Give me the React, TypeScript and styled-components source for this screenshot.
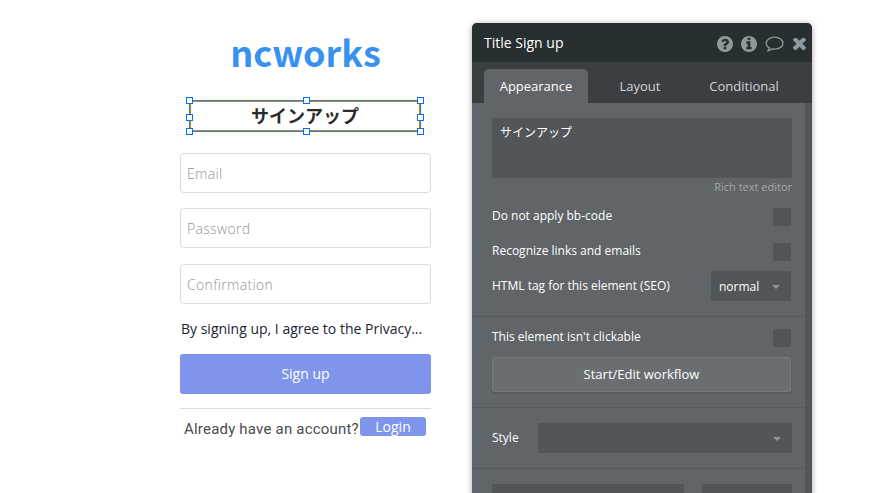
import type { ReactNode } from "react";
import styled, { createGlobalStyle } from "styled-components";

const GlobalStyle = createGlobalStyle`
  * {
    box-sizing: border-box;
  }
  body {
    margin: 0;
    background: #fff;
    font-family: "Open Sans", "Noto Sans CJK JP", sans-serif;
  }
`;

const Page = styled.div`
  height: 493px;
  overflow: hidden;
  display: flex;
  align-items: flex-start;
  gap: 41px;
  padding: 23px 0 0 180px;
`;

const Form = styled.div`
  width: 251px;
  display: flex;
  flex-direction: column;
`;

const Brand = styled.h1`
  margin: 0;
  height: 60px;
  line-height: 57px;
  font-family: "Noto Sans CJK JP", sans-serif;
  font-size: 36px;
  font-weight: 700;
  color: #3991ef;
  text-align: center;
`;

const Selection = styled.div`
  position: relative;
  width: 232px;
  height: 32px;
  margin: 17px 0 0 9px;
  border: 1px solid #1a86e8;
  outline: 1px solid #e07c00;
  outline-offset: -2px;
  line-height: 28px;
  font-family: "Noto Sans CJK JP", sans-serif;
  font-size: 18px;
  font-weight: 700;
  color: #2b2b2b;
  text-align: center;
`;

const Handle = styled.i<{ $x: number; $y: number }>`
  position: absolute;
  left: ${({ $x }) => $x}px;
  top: ${({ $y }) => $y}px;
  width: 7px;
  height: 7px;
  border: 1px solid #0b6cf5;
  background: #fff;
`;

const Input = styled.input<{ $top: number }>`
  width: 251px;
  height: 40px;
  margin-top: ${({ $top }) => $top}px;
  padding: 0 6px;
  border: 1px solid #d9d9e3;
  border-radius: 4px;
  font-family: "Open Sans", sans-serif;
  font-size: 14px;
  font-weight: 300;
  letter-spacing: 0.33px;
  &::placeholder {
    color: #8f959d;
  }
`;

const Terms = styled.div`
  height: 20px;
  margin: 15px 0 0 1px;
  line-height: 20px;
  font-size: 14px;
  color: #1c2331;
  white-space: nowrap;
`;

const SubmitButton = styled.button`
  height: 40px;
  margin-top: 15px;
  padding: 0 0 2px;
  border: 0;
  border-radius: 3px;
  background: #7f95eb;
  color: #fff;
  font-family: inherit;
  font-size: 14px;
`;

const LoginRow = styled.div`
  display: flex;
  margin-top: 14px;
  padding: 8px 0 0 4px;
  border-top: 1px solid #dcdcdf;
  span {
    width: 176px;
    line-height: 24px;
    font-family: Roboto, sans-serif;
    font-size: 15px;
    letter-spacing: 0.2px;
    color: #4b4b4b;
    white-space: nowrap;
  }
`;

const LoginButton = styled.button`
  width: 66px;
  height: 19px;
  padding: 0;
  border: 0;
  border-radius: 3px;
  background: #7f95eb;
  color: #fff;
  font-family: inherit;
  font-size: 14px;
  line-height: 19px;
`;

const PanelShadow = styled.div`
  border-radius: 5px 5px 0 0;
  box-shadow: 0 1px 6px rgba(0, 0, 0, 0.35);
`;

const Panel = styled.div`
  width: 340px;
  height: 490px;
  border-radius: 5px 5px 0 0;
  overflow: hidden;
  background: #5f6568;
  color: #fff;
  font-size: 12px;
`;

const PanelHeader = styled.div`
  display: flex;
  align-items: center;
  height: 39px;
  padding: 0 6px 0 12px;
  background: #282f31;
  font-size: 14px;
`;

const HeaderIcons = styled.div`
  display: flex;
  align-items: center;
  gap: 8px;
  margin: 3px 0 0 auto;
  color: #8e999d;
  svg {
    display: block;
    fill: currentColor;
  }
  svg:last-child {
    margin-left: 1px;
  }
`;

const Tabs = styled.div`
  display: flex;
  align-items: flex-end;
  height: 41px;
  padding-left: 12px;
  background: #3a3f41;
`;

const Tab = styled.div<{ $active?: boolean }>`
  width: 104px;
  height: 34px;
  border-radius: 5px 5px 0 0;
  background: ${({ $active }) => ($active ? "#5f6568" : "transparent")};
  color: ${({ $active }) => ($active ? "#fff" : "#d3d5d6")};
  font-size: 13px;
  line-height: 35px;
  text-align: center;
`;

const PanelBody = styled.div`
  height: 410px;
  border-right: 7px solid #515658;
`;

const Section = styled.section<{ $height: number; $top?: number }>`
  height: ${({ $height }) => $height}px;
  padding: ${({ $top = 0 }) => $top}px 13px 0 20px;
  border-bottom: 1px solid #565c5e;
`;

const TextArea = styled.div`
  height: 60px;
  padding: 5px 8px;
  background: #515658;
  font-family: "Noto Sans CJK JP", sans-serif;
  font-size: 12px;
  line-height: 18px;
`;

const RichLink = styled.div`
  height: 19px;
  font-size: 11px;
  line-height: 18px;
  color: #a4a8aa;
  text-align: right;
`;

const Row = styled.div<{ $height: number }>`
  display: flex;
  align-items: center;
  justify-content: space-between;
  height: ${({ $height }) => $height}px;
  padding-right: 1px;
`;

const Checkbox = styled.div`
  width: 18px;
  height: 18px;
  margin-top: 2px;
  border-radius: 1px;
  background: #515658;
`;

const Select = styled.div<{ $width: number }>`
  display: flex;
  align-items: center;
  justify-content: space-between;
  width: ${({ $width }) => $width}px;
  height: 30px;
  padding: 2px 11px 0 8px;
  border-radius: 1px;
  background: #515658;
  &::after {
    content: "";
    margin-left: auto;
    border: 4px solid transparent;
    border-top-color: #92989a;
    border-bottom: 0;
  }
`;

const WorkflowButton = styled.button`
  display: block;
  width: 299px;
  height: 35px;
  padding: 0 0 2px;
  border: 1px solid #757a7c;
  border-radius: 2px;
  background: #696e70;
  box-shadow: 0 1px 2px rgba(0, 0, 0, 0.15);
  color: #fff;
  font-family: inherit;
  font-size: 13px;
`;

const ClickableRow = styled(Row)`
  padding-bottom: 2px;
  ${Checkbox} {
    margin-top: 4px;
  }
`;

const StyleRow = styled.div`
  display: flex;
  justify-content: space-between;
  padding-top: 15px;
  line-height: 29px;
`;

const SizeRow = styled.div`
  display: flex;
  gap: 18px;
  padding: 15px 13px 0 20px;
`;

const SizeField = styled.div<{ $width: number }>`
  width: ${({ $width }) => $width}px;
  height: 30px;
  background: #515658;
`;

const handles = [
  [-4, -4],
  [113, -4],
  [227, -4],
  [-4, 13],
  [227, 13],
  [-4, 27],
  [113, 27],
  [227, 27],
];

function CircleIcon({ children }: { children: ReactNode }) {
  return (
    <svg width="16" height="16" viewBox="128 128 1536 1536">
      {children}
    </svg>
  );
}

const ring =
  "M1664 896q0 209-103 385.5t-279.5 279.5-385.5 103-385.5-103-279.5-279.5-103-385.5 103-385.5 279.5-279.5 385.5-103 385.5 103 279.5 279.5 103 385.5z";

function HelpIcon() {
  return (
    <CircleIcon>
      <path
        fillRule="evenodd"
        d={
          "M1024 1376v-192q0-14-9-23t-23-9h-192q-14 0-23 9t-9 23v192q0 14 9 23t23 9h192q14 0 23-9t9-23zm256-672q0-88-55.5-163t-138.5-116-170-41q-243 0-371 213-15 24 8 42l132 100q7 6 19 6 16 0 25-12 53-68 86-92 34-24 86-24 48 0 85.5 26t37.5 59q0 38-20 61t-68 45q-63 28-115.5 86.5t-52.5 125.5v36q0 14 9 23t23 9h192q14 0 23-9t9-23q0-19 21.5-49.5t54.5-49.5q32-18 49-28.5t46-35 44.5-48 28-60.5 12.5-81z" +
          ring
        }
      />
    </CircleIcon>
  );
}

function InfoIcon() {
  return (
    <CircleIcon>
      <path
        fillRule="evenodd"
        d={
          "M1152 1376v-160q0-14-9-23t-23-9h-96v-512q0-14-9-23t-23-9h-320q-14 0-23 9t-9 23v160q0 14 9 23t23 9h96v320h-96q-14 0-23 9t-9 23v160q0 14 9 23t23 9h448q14 0 23-9t9-23zm-128-896v-160q0-14-9-23t-23-9h-192q-14 0-23 9t-9 23v160q0 14 9 23t23 9h192q14 0 23-9t9-23z" +
          ring
        }
      />
    </CircleIcon>
  );
}

function CommentIcon() {
  return (
    <svg width="19" height="16" viewBox="0 0 19 16">
      <path
        d="M9.6 1.2C5 1.2 1.2 3.8 1.2 7.2c0 2 1.2 3.6 3.1 4.7-.2 1.3-.8 2.2-1.8 3 1.800-.2 3.400-1 4.600-2.100.8.2 1.600.3 2.500.3 4.600 0 8.400-2.600 8.400-5.900S14.200 1.200 9.600 1.200z"
        fill="none"
        stroke="currentColor"
        strokeWidth="1.3"
        strokeLinejoin="round"
      />
    </svg>
  );
}

function CloseIcon() {
  return (
    <svg width="13" height="13" viewBox="110 434 1188 1188">
      <path d="M1298 1322q0 40-28 68l-136 136q-28 28-68 28t-68-28l-294-294-294 294q-28 28-68 28t-68-28l-136-136q-28-28-28-68t28-68l294-294-294-294q-28-28-28-68t28-68l136-136q28-28 68-28t68 28l294 294 294-294q28-28 68-28t68 28l136 136q28 28 28 68t-28 68l-294 294 294 294q28 28 28 68z" />
    </svg>
  );
}

function SignUpForm() {
  return (
    <Form>
      <Brand>ncworks</Brand>
      <Selection>
        サインアップ
        {handles.map(([x, y]) => (
          <Handle key={`${x}:${y}`} $x={x} $y={y} />
        ))}
      </Selection>
      <Input placeholder="Email" $top={21} />
      <Input placeholder="Password" $top={15} />
      <Input placeholder="Confirmation" $top={16} />
      <Terms>By signing up, I agree to the Privacy...</Terms>
      <SubmitButton>Sign up</SubmitButton>
      <LoginRow>
        <span>Already have an account?</span>
        <LoginButton>Login</LoginButton>
      </LoginRow>
    </Form>
  );
}

function PropertyPanel() {
  return (
    <PanelShadow>
      <Panel>
        <PanelHeader>
          Title Sign up
          <HeaderIcons>
            <HelpIcon />
            <InfoIcon />
            <CommentIcon />
            <CloseIcon />
          </HeaderIcons>
        </PanelHeader>
        <Tabs>
          <Tab $active>Appearance</Tab>
          <Tab>Layout</Tab>
          <Tab>Conditional</Tab>
        </Tabs>
        <PanelBody>
          <Section $height={214} $top={15}>
            <TextArea>サインアップ</TextArea>
            <RichLink>Rich text editor</RichLink>
            <Row $height={37}>
              Do not apply bb-code
              <Checkbox />
            </Row>
            <Row $height={33}>
              Recognize links and emails
              <Checkbox />
            </Row>
            <Row $height={37}>
              HTML tag for this element (SEO)
              <Select $width={80}>normal</Select>
            </Row>
          </Section>
          <Section $height={91}>
            <ClickableRow $height={40}>
              This element isn't clickable
              <Checkbox />
            </ClickableRow>
            <WorkflowButton>Start/Edit workflow</WorkflowButton>
          </Section>
          <Section $height={61}>
            <StyleRow>
              Style
              <Select $width={254} />
            </StyleRow>
          </Section>
          <SizeRow>
            <SizeField $width={192} />
            <SizeField $width={90} />
          </SizeRow>
        </PanelBody>
      </Panel>
    </PanelShadow>
  );
}

export default function App() {
  return (
    <>
      <GlobalStyle />
      <Page>
        <SignUpForm />
        <PropertyPanel />
      </Page>
    </>
  );
}
